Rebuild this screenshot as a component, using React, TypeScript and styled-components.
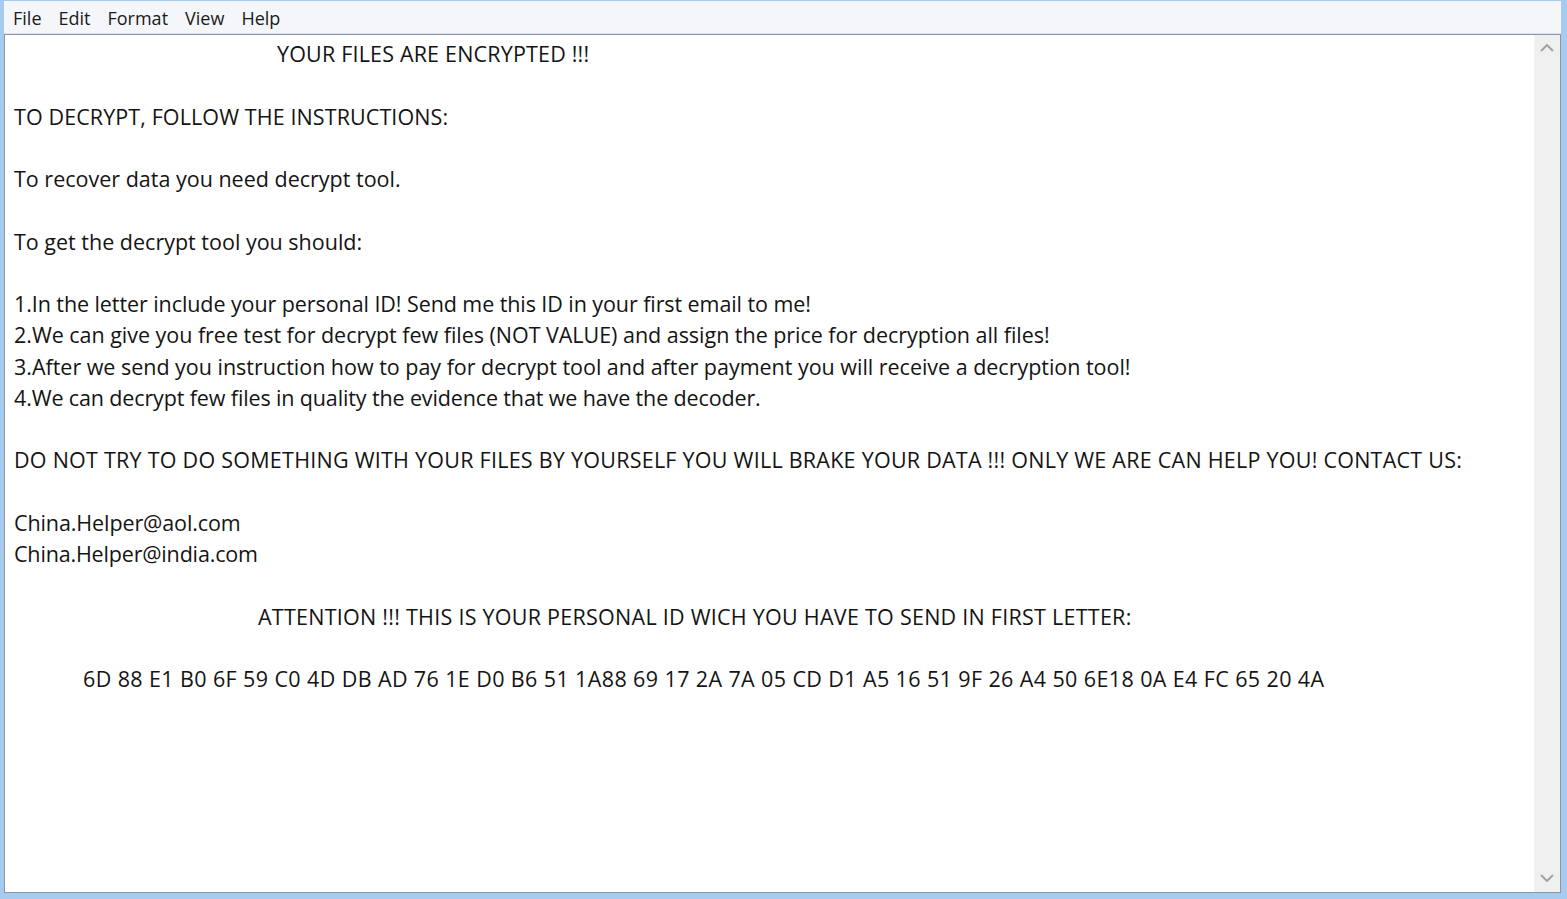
import styled, { createGlobalStyle } from "styled-components";

const GlobalStyle = createGlobalStyle`
  html, body {
    margin: 0;
    padding: 0;
    background: #a6cbef;
  }
`;

const Frame = styled.div`
  width: 1567px;
  height: 899px;
  box-sizing: border-box;
  padding: 1px 6px 6px 4px;
  background: #a6cbef;
  display: flex;
  flex-direction: column;
`;

const MenuBar = styled.div`
  height: 33px;
  flex-shrink: 0;
  display: flex;
  align-items: center;
  padding: 1px 0 0 0.5px;
  box-sizing: border-box;
  background: #f4f6f9;
  border-bottom: 1px solid #dde3ea;
  font-family: "Open Sans", "Noto Sans", sans-serif;
  font-size: 18px;
  color: #1a1a1a;
`;

const MenuItem = styled.span`
  padding: 0 8.5px;
  line-height: 28px;
`;

const Editor = styled.div`
  flex: 1;
  display: flex;
  min-height: 0;
  border: 1px solid #8a96a6;
  background: #fff;
`;

const TextArea = styled.div`
  flex: 1;
  padding: 3px 8px 0 9px;
  font-family: "Open Sans", "Noto Sans", sans-serif;
  font-size: 21.5px;
  line-height: 31.25px;
  color: #141414;
  white-space: pre;
  overflow: hidden;
`;

const Line = styled.div<{ $indent?: number; $spacing?: number }>`
  height: 31.25px;
  padding-left: ${(p) => p.$indent ?? 0}px;
  letter-spacing: ${(p) => p.$spacing ?? 0}px;
`;

const Scrollbar = styled.div`
  width: 26px;
  flex-shrink: 0;
  background: #f0f0f0;
  display: flex;
  flex-direction: column;
  justify-content: space-between;
  align-items: center;
  padding: 9px 0 10px;
`;

const Arrow = ({ down }: { down?: boolean }) => (
  <svg width="14" height="8" viewBox="0 0 14 8">
    <polyline
      points={down ? "1,1 7,7 13,1" : "1,7 7,1 13,7"}
      fill="none"
      stroke="#a3a3a3"
      strokeWidth="2"
    />
  </svg>
);

type Row = { text: string; indent?: number; spacing?: number };

const lines: Row[] = [
  { text: "YOUR FILES ARE ENCRYPTED !!!", indent: 263, spacing: 0.18 },
  { text: "" },
  { text: "TO DECRYPT, FOLLOW THE INSTRUCTIONS:", spacing: 0.1 },
  { text: "" },
  { text: "To recover data you need decrypt tool." },
  { text: "" },
  { text: "To get the decrypt tool you should:" },
  { text: "" },
  {
    text: "1.In the letter include your personal ID! Send me this ID in your first email to me!",
    spacing: -0.08,
  },
  {
    text: "2.We can give you free test for decrypt few files (NOT VALUE) and assign the price for decryption all files!",
    spacing: -0.03,
  },
  {
    text: "3.After we send you instruction how to pay for decrypt tool and after payment you will receive a decryption tool!",
    spacing: -0.02,
  },
  {
    text: "4.We can decrypt few files in quality the evidence that we have the decoder.",
    spacing: -0.13,
  },
  { text: "" },
  {
    text: "DO NOT TRY TO DO SOMETHING WITH YOUR FILES BY YOURSELF YOU WILL BRAKE YOUR DATA !!! ONLY WE ARE CAN HELP YOU! CONTACT US:",
    spacing: 0.25,
  },
  { text: "" },
  { text: "China.Helper@aol.com", spacing: -0.1 },
  { text: "China.Helper@india.com", spacing: -0.17 },
  { text: "" },
  {
    text: "ATTENTION !!! THIS IS YOUR PERSONAL ID WICH YOU HAVE TO SEND IN FIRST LETTER:",
    indent: 244,
    spacing: 0.26,
  },
  { text: "" },
  {
    text: "6D 88 E1 B0 6F 59 C0 4D DB AD 76 1E D0 B6 51 1A88 69 17 2A 7A 05 CD D1 A5 16 51 9F 26 A4 50 6E18 0A E4 FC 65 20 4A",
    indent: 69,
    spacing: 0.39,
  },
];

export default function App() {
  return (
    <>
      <GlobalStyle />
      <Frame>
        <MenuBar>
          {["File", "Edit", "Format", "View", "Help"].map((m) => (
            <MenuItem key={m}>{m}</MenuItem>
          ))}
        </MenuBar>
        <Editor>
          <TextArea>
            {lines.map((row, i) => (
              <Line key={i} $indent={row.indent} $spacing={row.spacing}>
                {row.text}
              </Line>
            ))}
          </TextArea>
          <Scrollbar>
            <Arrow />
            <Arrow down />
          </Scrollbar>
        </Editor>
      </Frame>
    </>
  );
}
